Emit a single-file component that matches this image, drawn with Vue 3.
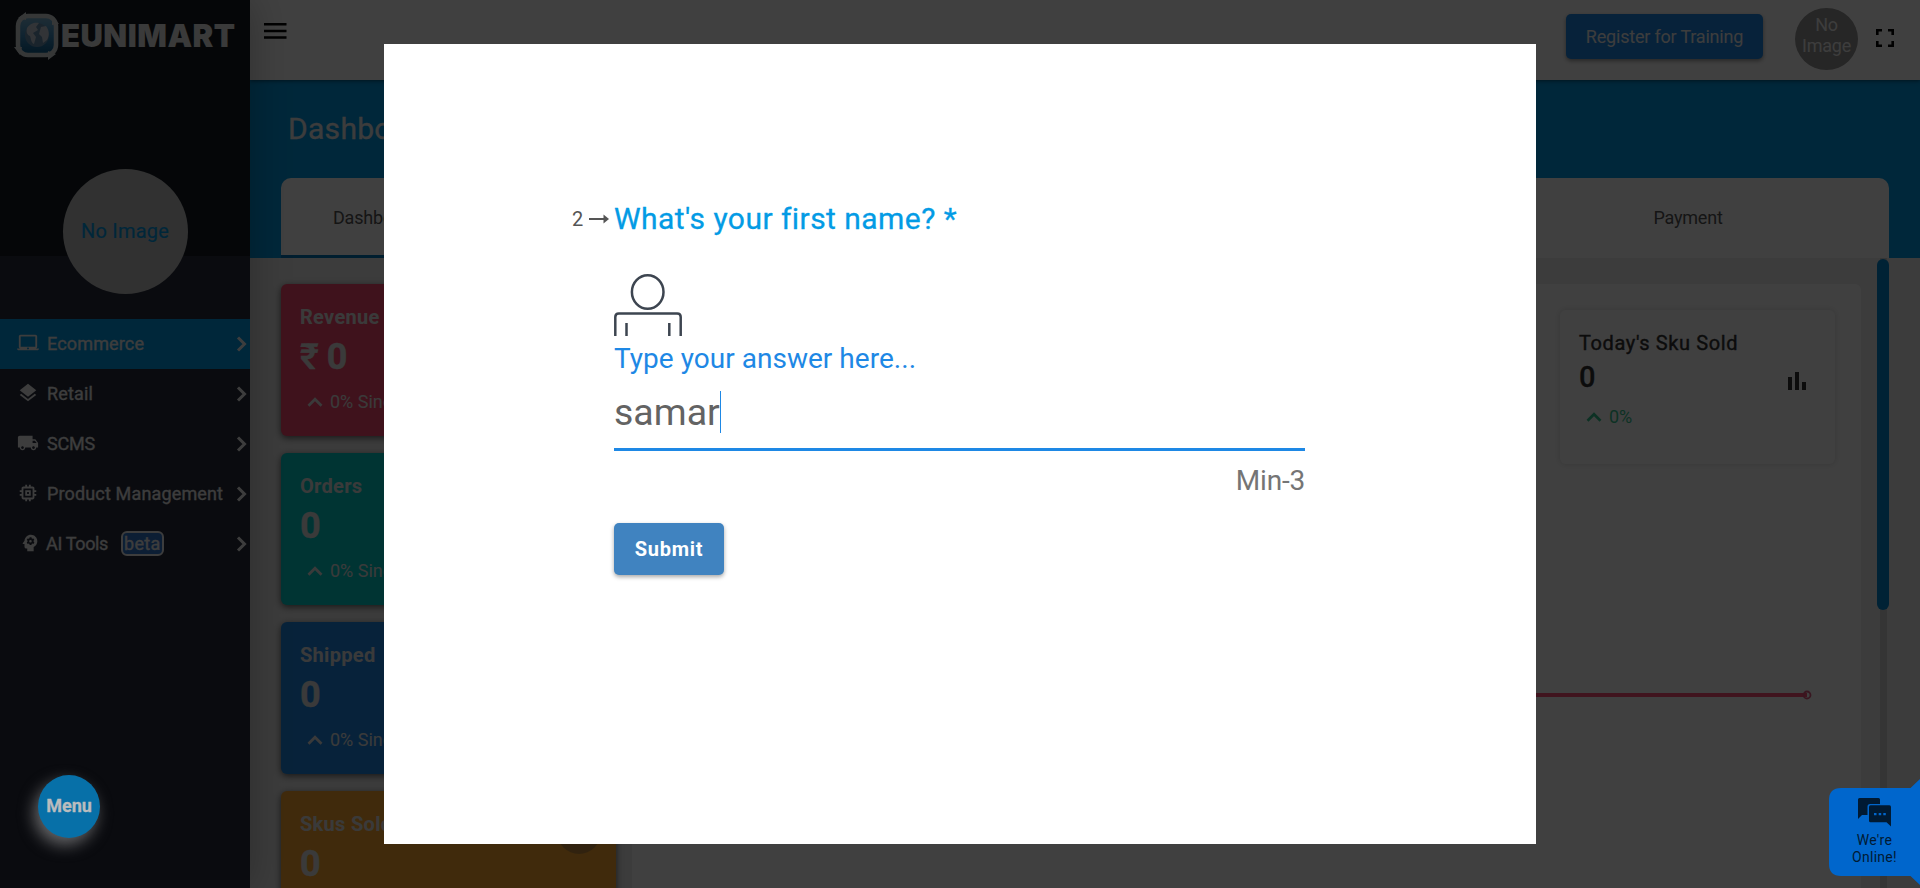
<script setup>
const nav = [
  { label: 'Ecommerce', active: true, icon: 'M20 18c1.1 0 1.99-.9 1.99-2L22 5c0-1.1-.9-2-2-2H4c-1.1 0-2 .9-2 2v11c0 1.1.9 2 2 2H0c0 1.1.9 2 2 2h20c1.1 0 2-.9 2-2h-4zM4 5h16v11H4V5zm8 14c-.55 0-1-.45-1-1s.45-1 1-1 1 .45 1 1-.45 1-1 1z' },
  { label: 'Retail', icon: 'M11.99 18.54l-7.37-5.73L3 14.07l9 7 9-7-1.63-1.27-7.38 5.74zM12 16l7.36-5.73L21 9l-9-7-9 7 1.63 1.27L12 16z' },
  { label: 'SCMS', tight: true, icon: 'M20 8h-3V4H3c-1.1 0-2 .9-2 2v11h2c0 1.66 1.34 3 3 3s3-1.34 3-3h6c0 1.66 1.34 3 3 3s3-1.34 3-3h2v-5l-3-4zM6 18.5c-.83 0-1.5-.67-1.5-1.5s.67-1.5 1.5-1.5 1.5.67 1.5 1.5-.67 1.5-1.5 1.5zm13.5-9l1.96 2.5H17V9.5h2.5zm-1.5 9c-.83 0-1.5-.67-1.5-1.5s.67-1.5 1.5-1.5 1.5.67 1.5 1.5-.67 1.5-1.5 1.5z' },
  { label: 'Product Management', icon: 'M15 9H9v6h6V9zm-2 4h-2v-2h2v2zm8-2V9h-2V7c0-1.1-.9-2-2-2h-2V3h-2v2h-2V3H9v2H7c-1.1 0-2 .9-2 2v2H3v2h2v2H3v2h2v2c0 1.1.9 2 2 2h2v2h2v-2h2v2h2v-2h2c1.1 0 2-.9 2-2v-2h2v-2h-2v-2h2zm-4 6H7V7h10v10z' },
  { label: 'AI Tools', beta: true, tight: true, icon: 'M13 3C9.25 3 6.2 5.94 6.02 9.64L4.1 12.2c-.25.33-.01.8.4.8H6v3c0 1.1.9 2 2 2h1v3h7v-4.68c2.36-1.12 4-3.53 4-6.32 0-3.87-3.13-7-7-7zm3 7-.1.6.9.7-1 1.7-1-.4-1 .6-.2 1.1h-2l-.2-1.1-1-.6-1 .4-1-1.7.9-.7V9.400l-.9-.7 1-1.700 1 .4 1-.6.2-1.100h2l.2 1.100 1 .6 1-.4 1 1.700-.9.700zM12.500 8.600a1.400 1.400 0 1 0 0 2.800 1.400 1.400 0 0 0 0-2.800z' },
]
const cards = [
  { title: 'Revenue', value: '0', rupee: true, tone: 'red' },
  { title: 'Orders', value: '0', tone: 'teal' },
  { title: 'Shipped', value: '0', tone: 'blue' },
  { title: 'Skus Sold', value: '0', tone: 'amber', last: true },
]
</script>

<template>
  <div class="app">
    <aside class="side">
      <div class="side-top">
        <div class="brand">
          <svg class="logo" width="46" height="48" viewBox="0 0 46 48">
            <defs>
              <linearGradient id="sky" x1="0" y1="0" x2="0" y2="1">
                <stop offset="0" stop-color="#7fb6d4" /><stop offset=".5" stop-color="#3f8dc0" /><stop offset="1" stop-color="#0b5a8a" />
              </linearGradient>
            </defs>
            <rect x="4" y="4" width="38" height="39" rx="10" fill="url(#sky)" stroke="#d6d9dc" stroke-width="4.500" />
            <path d="M4 6l8-6v8zM38 4l7 8-7 1zM0 35h8l-2 8zM34 39l8 3-8 6z" fill="#d6d9dc" />
            <circle cx="23" cy="23" r="12" fill="#6a90b0" />
            <path d="M13 16c3-5 8-6 12-5l-3 4 2 3-5 3 3 4-2 7c-3-1-3-6-4-8-3-1-4-4-3-8zM27 15l5-1c3 4 4 9 1 14l-4 3-1-6-3-3z" fill="#c6d0da" />
          </svg>
          <span class="brand-name">EUNIMART</span>
        </div>
      </div>
      <div class="profile"><div class="avatar">No Image</div></div>
      <nav>
        <a v-for="n in nav" :key="n.label" class="nav-item" :class="{ active: n.active, ai: n.beta, tight: n.tight }">
          <svg class="nav-icon" width="22" height="22" viewBox="0 0 24 24"><path :d="n.icon" fill="currentColor" fill-rule="evenodd" /></svg>
          <span class="nav-label">{{ n.label }}</span>
          <span v-if="n.beta" class="beta">beta</span>
          <svg class="chev" width="12" height="18" viewBox="0 0 12 18"><path d="M2 2.500l6.500 6.500L2 15.500" fill="none" stroke="currentColor" stroke-width="3" /></svg>
        </a>
      </nav>
    </aside>

    <main class="main">
      <header class="top">
        <svg class="burger" width="24" height="16" viewBox="0 0 24 16"><path d="M1 1.300h22.500M1 8h22.500M1 14.500h22.500" stroke="#000" stroke-width="2.500" /></svg>
        <button class="register">Register for Training</button>
        <div class="user">No<br />Image</div>
        <svg class="full" width="18" height="18" viewBox="0 0 18 18"><path d="M1.300 6V1.300H6M12 1.300h4.700V6M16.700 12v4.700H12M6 16.700H1.300V12" fill="none" stroke="#000" stroke-width="2.600" /></svg>
      </header>
      <section class="hero">
        <h1>Dashboard</h1>
        <div class="tabs">
          <div class="tab current">Dashboard</div>
          <div class="tab payment">Payment</div>
        </div>
      </section>
      <section class="content">
        <div class="stats">
          <div v-for="c in cards" :key="c.title" class="stat" :class="c.tone">
            <div class="stat-title">{{ c.title }}</div>
            <div class="stat-value"><span v-if="c.rupee" class="rupee">₹</span>{{ c.value }}</div>
            <div v-if="!c.last" class="trend">
              <svg width="16" height="10" viewBox="0 0 16 10"><path d="M1.500 8.700L8 2.200l6.500 6.500" fill="none" stroke="currentColor" stroke-width="2.700" /></svg>
              <span>0% Since</span>
            </div>
            <i class="bubble"></i>
          </div>
        </div>
        <div class="panel">
          <div class="today">
            <div class="today-title">Today's Sku Sold</div>
            <div class="today-row">
              <span>0</span>
              <svg width="18" height="18" viewBox="0 0 18 18"><path d="M0 5h4v13H0zM7 0h4v18H7zM14 10h4v8h-4z" fill="#333" /></svg>
            </div>
            <div class="trend green">
              <svg width="16" height="10" viewBox="0 0 16 10"><path d="M1.500 8.700L8 2.200l6.500 6.500" fill="none" stroke="currentColor" stroke-width="2.700" /></svg>
              <span>0%</span>
            </div>
          </div>
          <svg class="chart" width="1190" height="12" viewBox="0 0 1190 12"><path d="M0 6h1175" stroke="#ff4f7a" stroke-width="4" /><circle cx="1175" cy="6" r="3.500" fill="none" stroke="#e05a80" stroke-width="1.800" /></svg>
        </div>
        <div class="track"><div class="thumb"></div></div>
      </section>
    </main>

    <div class="overlay">
      <div class="modal">
        <form class="form" @submit.prevent>
          <div class="question">
            <span class="num">2</span>
            <svg class="arrow" width="20" height="10" viewBox="0 0 20 10"><path d="M0 5h16" stroke="#555" stroke-width="2" /><path d="M14.500 .5L20 5l-5.500 4.500z" fill="#555" /></svg>
            <h2>What's your first name? *</h2>
          </div>
          <svg class="person" width="68" height="62" viewBox="0 0 68 62" fill="none" stroke="#3d4550" stroke-width="2.500">
            <ellipse cx="33.700" cy="18" rx="15.800" ry="16.700" />
            <path d="M1.300 62V43q0-3.500 3.500-3.500h58.400q3.500 0 3.500 3.500v19M12.500 49v13M55.300 49v13" />
          </svg>
          <label>Type your answer here...</label>
          <div class="input"><span>samar</span><i class="caret"></i></div>
          <div class="hint">Min-3</div>
          <button class="submit">Submit</button>
        </form>
      </div>
    </div>

    <div class="menu">Menu</div>
    <div class="chat">
      <svg class="chat-shape" width="91" height="106" viewBox="0 0 91 106"><path d="M91 0L81.500 9H12Q0 9 0 21V85Q0 97 12 97H81.500L91 106z" fill="#06c" /></svg>
      <div class="chat-body">
        <svg width="33" height="29" viewBox="0 0 33 29" fill="#001a33">
          <path d="M1.500 0h19q1.500 0 1.500 1.500V6H12q-2.500 0-2.500 2.500V17H4L0 21V1.500Q0 0 1.500 0z" />
          <path fill-rule="evenodd" d="M12.500 7.300h19Q33 7.300 33 9v19.500l-4.500-4.200h-16Q11 24.300 11 22.700V9q0-1.700 1.500-1.700zM16 15v2.200h2.500V15zM20.700 15v2.200h2.500V15zM25.300 15v2.200h2.500V15z" />
        </svg>
        <div class="chat-text">We're<br />Online!</div>
      </div>
    </div>
  </div>
</template>

<style>
html, body { margin: 0; overflow: hidden; }
</style>

<style scoped>
* { box-sizing: border-box; }
.app { position: relative; display: flex; width: 1920px; height: 888px; overflow: hidden; font-family: Roboto, "Liberation Sans", sans-serif; background: #ededed; }
button { font: inherit; border: 0; }
.side { position: relative; z-index: 1; width: 250px; background: #2a2f3e; box-shadow: 2px 0 36px rgba(0, 0, 0, .25); flex: none; }
.side-top { height: 256px; background: #151b22; }
.brand { display: flex; padding: 12px 0 0 14px; }
.brand-name { font: 900 31px/48px Inter, sans-serif; color: #e8e8e8; margin-left: 1px; letter-spacing: .5px; }
.profile { height: 63px; display: flex; justify-content: center; align-items: flex-end; padding-bottom: 25px; }
.avatar { width: 125px; height: 125px; flex: none; border-radius: 50%; background: #c4c4c4; color: #039be5; font-size: 20px; letter-spacing: .2px; display: flex; align-items: center; justify-content: center; -webkit-text-stroke: .2px; padding-bottom: 1px; }
.nav-item { display: flex; align-items: center; height: 50px; padding: 0 2px 0 17px; color: #f2f2f2; font-size: 18px; -webkit-text-stroke: .3px; }
.nav-item.active { background: #039be5; }
.nav-icon { margin: -3px 8px 0 0; }
.nav-label { letter-spacing: .15px; margin-top: -2px; }
.ai .nav-icon { margin-left: 2px; margin-right: 5px; }
.tight .nav-label { letter-spacing: -.2px; }
.ai .nav-label { letter-spacing: -.35px; }
.beta { margin: -2px 0 0 13px; padding: 0 1px; height: 25px; line-height: 22px; border: 2px solid #f2f2f2; border-radius: 6px; background: #3378d0; letter-spacing: .3px; }
.chev { margin-left: auto; }
.main { flex: 1; display: flex; flex-direction: column; min-width: 0; }
.top { position: relative; height: 80px; background: #fff; display: flex; align-items: flex-start; padding-right: 26px; box-shadow: 0 1px 4px rgba(0, 0, 0, .5); }
.burger { margin: 23px auto 0 13px; }
.register { margin-top: 14px; width: 197px; height: 45px; border-radius: 5px; background: #1e88e5; color: #f2f2f2; font-size: 18px; padding: 0; box-shadow: 0 2px 4px rgba(0, 0, 0, .4); letter-spacing: -.2px; }
.user { margin: 8px 18px 0 32px; width: 63px; height: 62px; border-radius: 50%; background: #969696; color: #f2f2f2; font-size: 18px; line-height: 21px; text-align: center; padding-top: 6px; letter-spacing: -.2px; }
.full { margin-top: 29px; }
.hero { height: 178px; background: #039be5; padding: 29px 31px 0; display: flex; flex-direction: column; }
h1 { margin: 0 0 29px 7px; font-size: 30px; line-height: 40px; font-weight: 400; color: #f0f0f0; letter-spacing: .3px; -webkit-text-stroke: .3px; }
.tabs { display: flex; justify-content: space-between; height: 80px; background: #fff; border-radius: 10px 10px 0 0; overflow: hidden; }
.tab { line-height: 79px; font-size: 18px; color: #555; letter-spacing: -.2px; }
.current { width: 402px; padding-left: 52px; border-bottom: 3px solid #0277bd; }
.payment { width: 402px; text-align: center; }
.content { flex: 1; display: flex; padding-left: 31px; min-height: 0; overflow: hidden; }
.stats { width: 335px; padding-top: 26px; flex: none; display: flex; flex-direction: column; gap: 17px; }
.stat { position: relative; height: 152px; flex: none; border-radius: 6px; padding: 20px 19px; color: #e8e8e8; box-shadow: 0 2px 7px rgba(0, 0, 0, .6); }
.red { background: #fc4870; }
.teal { background: #00cfcc; }
.blue { background: #1e88e5; }
.amber { background: #ffa832; }
.stat-title { font-size: 20px; line-height: 26px; font-weight: 700; letter-spacing: .3px; }
.stat-value { font-size: 36px; line-height: 40px; font-weight: 700; margin-top: 7px; -webkit-text-stroke: .4px; }
.rupee { font-weight: 500; margin-right: 8px; }
.trend { display: flex; align-items: center; gap: 7px; margin: 14px 0 0 7px; font-size: 18px; line-height: 22px; white-space: nowrap; }
.bubble { position: absolute; right: 15px; top: 19px; width: 44px; height: 44px; border-radius: 50%; background: rgba(80, 80, 80, .35); }
.panel { margin: 26px 16px 0 16px; width: 1229px; height: 700px; flex: none; background: #fff; border-radius: 6px; display: flex; flex-direction: column; align-items: flex-end; }
.today { width: 275px; height: 154px; margin: 26px 26px 0 0; padding: 20px 29px 0 19px; border-radius: 6px; box-shadow: 0 0 6px rgba(0, 0, 0, .17); color: #333; }
.today-title { font-size: 20px; line-height: 26px; font-weight: 400; letter-spacing: .6px; -webkit-text-stroke: .4px; }
.today-row { display: flex; justify-content: space-between; font-size: 29px; line-height: 42px; height: 40px; font-weight: 500; -webkit-text-stroke: .3px; }
.today-row svg { margin-top: 16px; }
.green { color: #35c490; margin-top: 10px; }
.chart { align-self: flex-start; margin-top: 225px; }
.track { width: 12px; height: 630px; background: linear-gradient(90deg, transparent 3px, #d4d4d4 3px 10px, transparent 10px); }
.thumb { margin-top: 1px; height: 351px; border-radius: 6px; background: #0288d1; }
.overlay { position: absolute; z-index: 2; inset: 0; background: rgba(0, 0, 0, .75); display: flex; justify-content: center; align-items: center; }
.modal { width: 1152px; height: 800px; background: #fff; padding: 153px 231px 0 188px; }
.form { display: flex; flex-direction: column; align-items: flex-start; }
.question { display: flex; align-items: center; height: 44px; color: #039be5; }
.num { width: 17px; font-size: 20px; color: #555; }
.arrow { margin: 0 5px 0 0; }
h2 { margin: -2px 0 0; font-size: 30px; font-weight: 400; letter-spacing: .45px; white-space: nowrap; -webkit-text-stroke: .3px; }
.person { margin: 33px 0 0 42px; }
label { margin: 5px 0 0 42px; font-size: 28px; line-height: 36px; color: #1e88e5; letter-spacing: .03px; }
.input { display: flex; align-items: center; align-self: stretch; margin: 10px 0 0 42px; height: 64px; border-bottom: 3px solid #1e88e5; font-size: 37.500px; color: #636363; padding-bottom: 11px; }
.caret { width: 1px; height: 42px; background: #1e88e5; }
.hint { align-self: flex-end; font-size: 28px; line-height: 36px; margin-top: 12px; color: #757575; letter-spacing: -.2px; }
.submit { margin: 24px 0 0 42px; width: 110px; height: 52px; border-radius: 5px; background: #4083c0; color: #fff; font-size: 20px; font-weight: 700; padding: 0; box-shadow: 0 2px 4px rgba(0, 0, 0, .35); letter-spacing: .75px; }
.menu { position: absolute; z-index: 3; left: 38px; top: 775px; width: 62px; height: 63px; border-radius: 50%; background: #0770a8; color: #b9bcbe; font: 700 18px/62px Roboto, sans-serif; text-align: center; box-shadow: -4px 7px 16px rgba(190, 190, 190, .5); letter-spacing: -.1px; -webkit-text-stroke: .3px; }
.chat { position: absolute; z-index: 3; left: 1829px; top: 779px; width: 91px; height: 106px; }
.chat-shape { position: absolute; left: 0; top: 0; }
.chat-body { position: relative; display: flex; flex-direction: column; align-items: center; padding-top: 19px; color: #001a33; font-size: 14px; line-height: 17px; text-align: center; letter-spacing: .3px; }
.chat-text { margin-top: 5px; }
</style>
